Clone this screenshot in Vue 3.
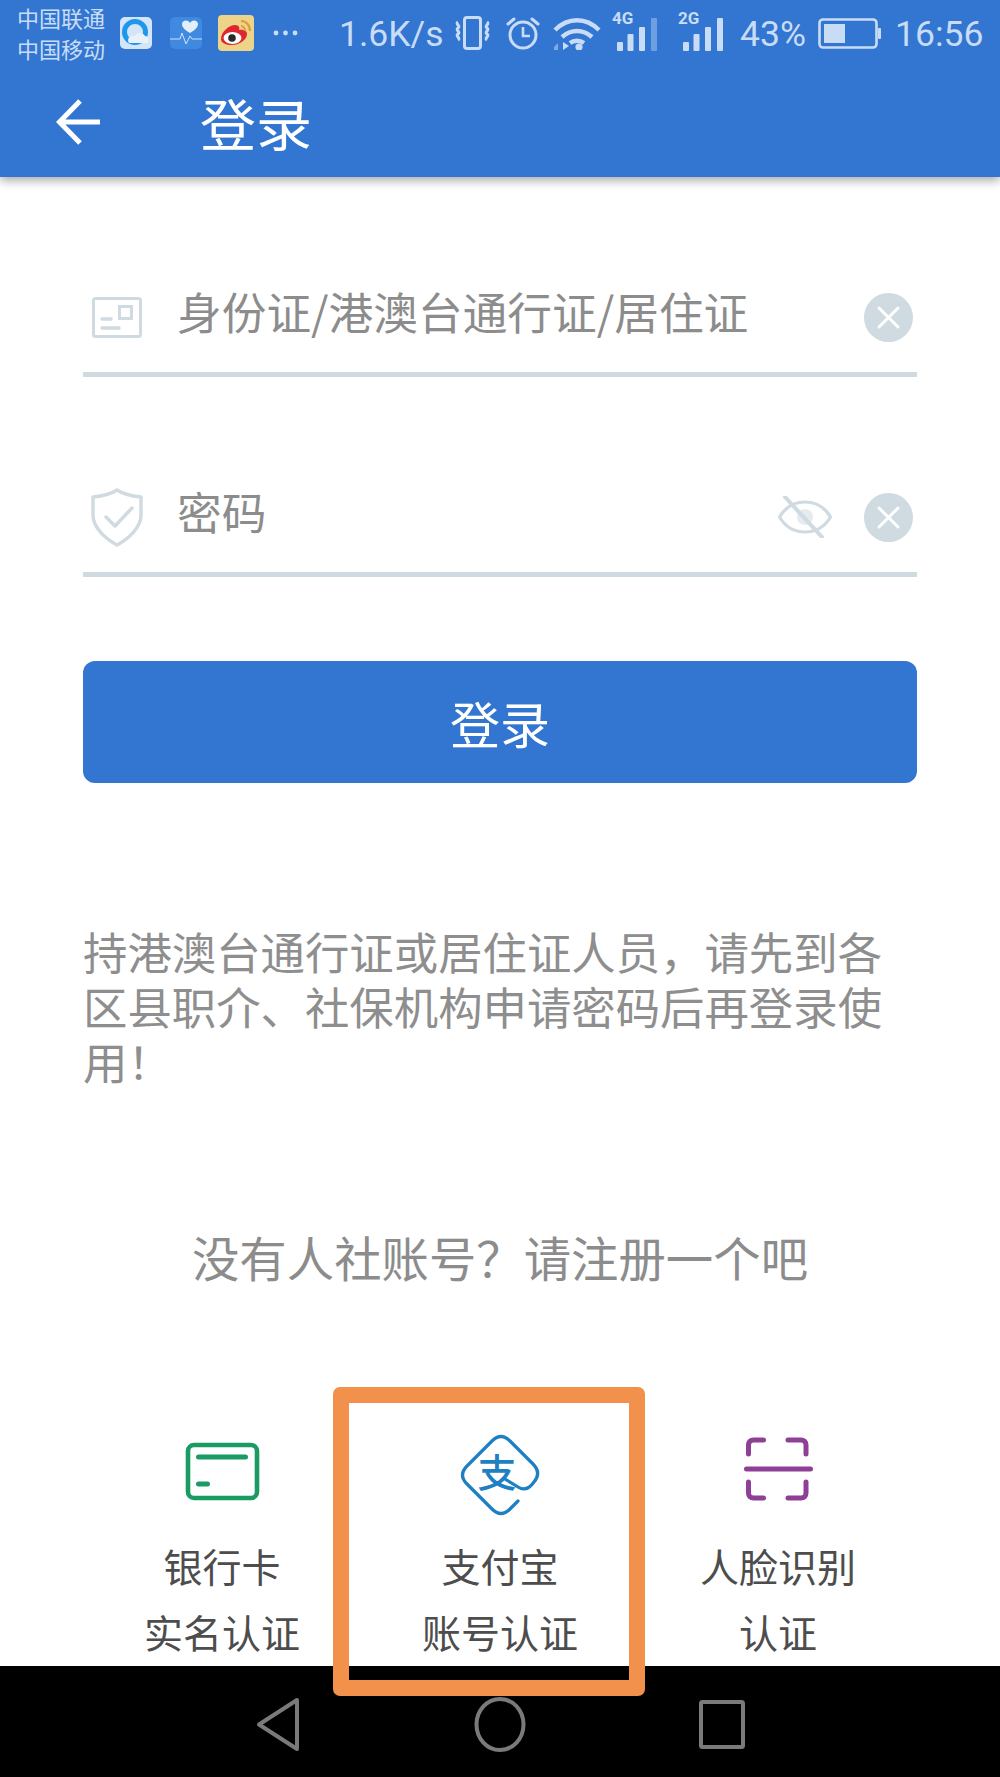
<script setup>
const options = [
  { key: "bank", lines: ["银行卡", "实名认证"] },
  { key: "alipay", lines: ["支付宝", "账号认证"] },
  { key: "face", lines: ["人脸识别", "认证"] },
];
</script>

<template>
  <div class="page">
    <header class="header">
      <div class="status">
        <div class="carrier">
          <span>中国联通</span>
          <span>中国移动</span>
        </div>
        <svg class="app app-browser" width="32" height="32" viewBox="0 0 32 32">
          <rect width="32" height="32" rx="5" fill="#d5e5f8" />
          <circle cx="15" cy="15" r="10.5" fill="none" stroke="#1f97ee" stroke-width="5" />
          <path d="M9 26c-3-5 2-8 6-7 2-4 8-4 10 0 4 0 5 5 2 7z" fill="#e9f1fb" />
        </svg>
        <svg class="app app-health" width="32" height="32" viewBox="0 0 32 32">
          <rect width="32" height="32" rx="5" fill="#3f8ae0" />
          <path d="M20 18c-7-4-8-7-8-9 0-4 6-5 8-1 2-4 8-3 8 1 0 2-1 5-8 9z" transform="translate(0 -2)" fill="#e3eefb" />
          <path d="M0 22h10l2-6 4 11 4-8 2 3h10" fill="none" stroke="#cfe2f8" stroke-width="1" />
        </svg>
        <svg class="app app-weibo" width="36" height="36" viewBox="0 0 36 36">
          <rect width="36" height="36" rx="4" fill="#ecd588" />
          <path d="M3 24c0-7 8-14 14-14 4 0 5 3 4 5 4-1 8 1 8 4 0 6-8 11-15 11-6 0-11-2-11-6z" fill="#e0262e" />
          <ellipse cx="14.5" cy="23" rx="9" ry="6" fill="#fff" />
          <circle cx="14" cy="23" r="3.8" fill="#2a2a2a" />
          <path d="M23 6c5 0 9 4 9 10M23 11c2 0 4 2 4 5" fill="none" stroke="#e09a3a" stroke-width="2.2" />
        </svg>
        <svg class="dots" width="25" height="6" viewBox="0 0 25 6">
          <circle cx="3" cy="3" r="2.4" fill="#c9dcf6" />
          <circle cx="12.5" cy="3" r="2.4" fill="#c9dcf6" />
          <circle cx="22" cy="3" r="2.4" fill="#c9dcf6" />
        </svg>
        <span class="speed">1.6K/s</span>
        <svg class="vibrate" width="37" height="34" viewBox="0 0 37 34" fill="none" stroke="#c9dcf6">
          <rect x="10.5" y="1.5" width="16" height="31" rx="2.5" stroke-width="3" />
          <path d="M4 6c-3 2 3 4 0 6s3 4 0 6 3 4 0 6M33 6c3 2-3 4 0 6s-3 4 0 6-3 4 0 6" stroke-width="3" />
        </svg>
        <svg class="alarm" width="34" height="34" viewBox="0 0 34 34" fill="none" stroke="#c9dcf6" stroke-width="3">
          <circle cx="17" cy="19" r="13" />
          <path d="M17 11v9h7" stroke-width="2.6" />
          <path d="M2 8l6-5M32 8l-6-5" stroke-linecap="round" />
        </svg>
        <svg class="wifi" width="50" height="34" viewBox="0 0 50 34" fill="none" stroke="#c9dcf6" stroke-width="4.4">
          <path d="M3 14c13-13 31-13 44 0M10 21c9-8 21-8 30 0M18 27c4-3 10-3 14 0" />
          <circle cx="27" cy="31" r="3.6" fill="#c9dcf6" stroke="none" />
          <path d="M11 26l6 4-6 4z" fill="#c9dcf6" stroke="none" />
          <path d="M2 31l4-4v7H2z" fill="#7fa9e4" stroke="none" />
        </svg>
        <svg class="signal sim-one" width="45" height="44" viewBox="0 -4 45 44">
          <text x="0" y="13" class="net">4G</text>
          <rect x="5" y="31" width="6" height="9" rx="1" fill="#c9dcf6" />
          <rect x="15.5" y="23" width="6" height="17" rx="1" fill="#c9dcf6" />
          <rect x="27" y="16" width="6" height="24" rx="1" fill="#c9dcf6" />
          <rect x="39" y="7" width="6" height="33" rx="1" fill="#6e9fe0" />
        </svg>
        <svg class="signal sim-two" width="45" height="44" viewBox="0 -4 45 44">
          <text x="0" y="13" class="net">2G</text>
          <rect x="5" y="31" width="6" height="9" rx="1" fill="#c9dcf6" />
          <rect x="15.5" y="23" width="6" height="17" rx="1" fill="#c9dcf6" />
          <rect x="27" y="16" width="6" height="24" rx="1" fill="#c9dcf6" />
          <rect x="39" y="7" width="6" height="33" rx="1" fill="#c9dcf6" />
        </svg>
        <span class="percent">43%</span>
        <svg class="battery" width="63" height="31" viewBox="0 0 63 31">
          <rect x="1.5" y="1.5" width="57" height="28" rx="3.5" fill="none" stroke="#c9dcf6" stroke-width="2.6" />
          <rect x="6" y="6" width="21" height="19" fill="#c9dcf6" />
          <rect x="60" y="10" width="3" height="11" rx="1" fill="#c9dcf6" />
        </svg>
        <span class="clock">16:56</span>
      </div>
      <div class="titlebar">
        <svg class="back" width="44" height="46" viewBox="0 0 44 46" fill="none" stroke="#fff" stroke-width="5">
          <path d="M44 23H4M24 2L3.5 23 24 44" />
        </svg>
        <span class="title">登录</span>
      </div>
    </header>

    <main class="content">
      <div class="field">
        <svg class="field-icon" width="60" height="60" viewBox="0 0 60 60" fill="none" stroke="#cfdae1" stroke-width="3">
          <rect x="8.5" y="11.5" width="47" height="38" rx="2" />
          <rect x="34.5" y="19.5" width="12" height="12" />
          <path d="M17 32h9M17 41h17" stroke-width="3.4" stroke-linecap="round" />
        </svg>
        <span class="placeholder">身份证/港澳台通行证/居住证</span>
        <svg class="clear" width="49" height="49" viewBox="0 0 49 49">
          <circle cx="24.5" cy="24.5" r="24.5" fill="#cfdae1" />
          <path d="M15 15l19 19M34 15L15 34" stroke="#fff" stroke-width="3" stroke-linecap="round" />
        </svg>
      </div>
      <div class="field field-second">
        <svg class="field-icon" width="60" height="60" viewBox="0 0 60 60" fill="none" stroke="#cfdae1" stroke-width="3.4">
          <path d="M32 3c6 4 14 6 24 7v18c0 13-13 24-24 30C21 52 8 41 8 28V10c10-1 18-3 24-7z" stroke-linejoin="round" />
          <path d="M21 30l9 9 17-18" stroke-linecap="round" stroke-linejoin="round" />
        </svg>
        <span class="placeholder">密码</span>
        <svg class="eye" width="54" height="42" viewBox="0 0 54 42" fill="none" stroke="#cfdae1" stroke-width="3.2">
          <path d="M1.5 21C8 10 17 6 27 6s19 4 25.5 15C46 32 37 36 27 36S8 32 1.5 21z" stroke-linejoin="round" />
          <circle cx="27" cy="21" r="8" fill="#cfdae1" stroke="none" opacity=".55" />
          <path d="M7 1l37 40" stroke-width="4" stroke-linecap="round" />
        </svg>
        <svg class="clear" width="49" height="49" viewBox="0 0 49 49">
          <circle cx="24.5" cy="24.5" r="24.5" fill="#cfdae1" />
          <path d="M15 15l19 19M34 15L15 34" stroke="#fff" stroke-width="3" stroke-linecap="round" />
        </svg>
      </div>

      <button class="login" type="button">登录</button>

      <p class="notice">持港澳台通行证或居住证人员，请先到各区县职介、社保机构申请密码后再登录使用！</p>
      <p class="register">没有人社账号？请注册一个吧</p>

      <div class="options">
        <div v-for="item in options" :key="item.key" class="option">
          <svg v-if="item.key === 'bank'" width="100" height="100" viewBox="0 0 100 100" fill="none" stroke="#1a9b63">
            <rect x="16" y="20" width="69" height="53" rx="6" stroke-width="4.6" />
            <path d="M26.5 32h47M26.5 59h9" stroke-width="5" stroke-linecap="round" />
          </svg>
          <svg v-else-if="item.key === 'alipay'" width="100" height="100" viewBox="0 0 100 100" fill="none" stroke="#1e7fc2" stroke-width="3.2">
            <path d="M68 76l-8 8c-6 6-12 6-18 0L17 59c-6-6-6-12 0-18l25-25c6-6 12-6 18 0l23 23c6 6 6 12 1 18-5 7-10 9-16 5l-13-8" stroke-linecap="round" />
            <text x="47" y="62" class="alipay-mark">支</text>
          </svg>
          <svg v-else width="100" height="100" viewBox="0 0 100 100" fill="none" stroke="#8e3f96" stroke-width="5" stroke-linecap="round">
            <path d="M20.5 29V20c0-3 2-5 5-5h10M60 15h13c3 0 5 2 5 5v9M18.5 44h64M20.5 57v11c0 3 2 5 5 5h10M60 73h13c3 0 5-2 5-5V57" />
          </svg>
          <span v-for="line in item.lines" :key="line" class="option-line">{{ line }}</span>
        </div>
      </div>
    </main>

    <nav class="navbar">
      <svg width="44" height="55" viewBox="0 0 44 55" fill="none" stroke="#7a7a7a" stroke-width="4" stroke-linejoin="round">
        <path d="M41 3v49L3 27.5z" />
      </svg>
      <svg width="52" height="55" viewBox="0 0 52 55" fill="none" stroke="#7a7a7a" stroke-width="4">
        <ellipse cx="26" cy="27.5" rx="23.5" ry="25.5" />
      </svg>
      <svg width="46" height="49" viewBox="0 0 46 49" fill="none" stroke="#7a7a7a" stroke-width="4" stroke-linejoin="round">
        <rect x="2" y="2" width="42" height="45" rx="1.5" />
      </svg>
    </nav>

    <div class="highlight"></div>
  </div>
</template>

<style scoped>
.page {
  position: relative;
  width: 1000px;
  height: 1777px;
  overflow: hidden;
  background: #fff;
  font-family: "Noto Sans CJK SC", "Noto Sans", sans-serif;
}

.header {
  position: relative;
  height: 177px;
  background: #3276d1;
  box-shadow: 0 4px 9px rgba(0, 0, 0, 0.32);
}

.status {
  display: flex;
  align-items: center;
  height: 66px;
  padding-left: 17px;
  color: #c9dcf6;
}

.carrier {
  display: flex;
  flex-direction: column;
  width: 88px;
  font-size: 22px;
  line-height: 31px;
  white-space: nowrap;
}

.app,
.dots,
.vibrate,
.alarm,
.wifi,
.signal,
.battery,
.speed,
.percent,
.clock {
  flex: none;
}

.app-browser { margin-left: 15px; }
.app-health { margin-left: 18px; }
.app-weibo { margin-left: 16px; }
.dots { margin-left: 19px; }
.speed { margin-left: 41px; width: 102px; }
.vibrate { margin-left: 13px; }
.alarm { margin-left: 15px; }
.wifi { margin-left: 12px; }
.sim-one { margin-left: 10px; margin-top: -8px; }
.sim-two { margin-left: 21px; margin-top: -8px; }
.percent { margin-left: 17px; width: 66px; }
.battery { margin-left: 12px; }
.clock { margin-left: 14px; }

.speed,
.percent,
.clock {
  margin-top: 2px;
  font-family: Roboto, sans-serif;
  font-size: 35.5px;
  line-height: 40px;
  white-space: nowrap;
}

.net {
  font-family: Roboto, sans-serif;
  font-size: 17px;
  font-weight: 700;
  fill: #c9dcf6;
}

.titlebar {
  display: flex;
  align-items: center;
  height: 111px;
  padding-left: 56px;
  color: #fff;
}

.title {
  margin-left: 100px;
  font-size: 56px;
  line-height: 70px;
}

.content {
  padding: 85px 83px 0;
}

.field {
  display: flex;
  align-items: center;
  height: 110px;
  border-bottom: 5px solid #cfdae1;
}

.field-second {
  margin-top: 85px;
}

.field-icon {
  flex: none;
  margin-left: 2px;
  margin-right: 32px;
}

.placeholder {
  flex: 1;
  margin-top: -13px;
  color: #8c8c8c;
  font-size: 44.7px;
  line-height: 60px;
  white-space: nowrap;
}

.eye {
  flex: none;
  margin-right: 32px;
}

.clear {
  flex: none;
  margin-right: 4px;
}

.login {
  display: block;
  width: 100%;
  height: 122px;
  margin-top: 84px;
  padding: 0;
  border: 0;
  border-radius: 12px;
  background: #3276d1;
  color: #fff;
  font-family: inherit;
  font-size: 50px;
}

.notice {
  margin: 140px 0 0;
  color: #8e8e8e;
  font-size: 44.4px;
  line-height: 55px;
}

.register {
  margin: 139px 0 0;
  color: #8c8c8c;
  font-size: 47.4px;
  line-height: 60px;
  text-align: center;
  white-space: nowrap;
}

.options {
  display: grid;
  grid-template-columns: repeat(3, 1fr);
  margin-top: 138px;
}

.option {
  display: flex;
  flex-direction: column;
  align-items: center;
}

.option svg {
  margin-bottom: 7px;
}

.alipay-mark {
  fill: #1e7fc2;
  stroke: none;
  font-size: 39px;
  font-weight: 500;
  text-anchor: middle;
  font-family: "Noto Sans CJK SC", sans-serif;
}

.option-line {
  color: #4d4d4d;
  font-size: 39px;
  line-height: 66px;
  white-space: nowrap;
}

.navbar {
  position: absolute;
  left: 0;
  right: 0;
  bottom: 0;
  display: flex;
  align-items: center;
  justify-content: space-between;
  box-sizing: border-box;
  height: 111px;
  padding: 31px 255px 25px 256px;
  background: #000;
}

.highlight {
  position: absolute;
  left: 333px;
  top: 1387px;
  box-sizing: border-box;
  width: 312px;
  height: 309px;
  border: 16px solid #f2914c;
  border-radius: 7px;
  pointer-events: none;
}
</style>
